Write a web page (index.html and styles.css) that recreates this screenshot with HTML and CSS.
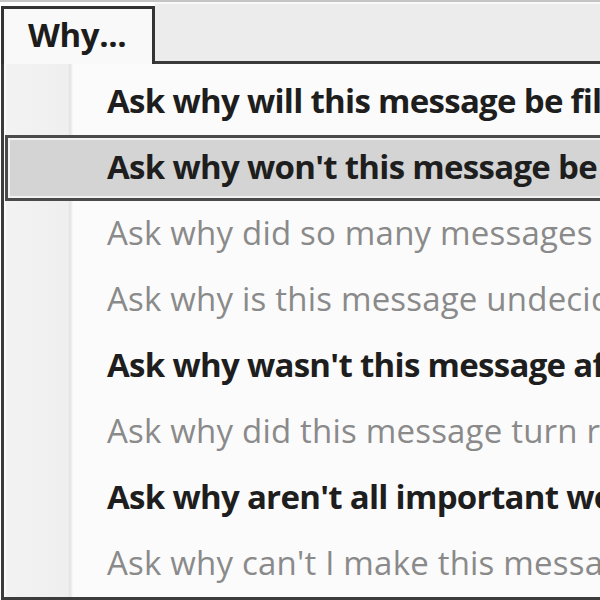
FILE: index.html
```html
<!DOCTYPE html>
<html lang="en">
<head>
    <meta charset="UTF-8">
    <meta name="viewport" content="width=device-width, initial-scale=1.0">
    <title>Why...</title>
    <link rel="stylesheet" href="styles.css">
</head>
<body>
    <div id="window">
        <div class="menubar">
            <div class="menu-tab">Why...</div>
            <div class="menubar-rest"></div>
        </div>

        <ul class="dropdown">
            <li class="item">Ask why will this message be filtered?</li>
            <li class="item active">Ask why won't this message be filtered?</li>
            <li class="item disabled">Ask why did so many messages turn up?</li>
            <li class="item disabled">Ask why is this message undecided?</li>
            <li class="item">Ask why wasn't this message affected?</li>
            <li class="item disabled">Ask why did this message turn red?</li>
            <li class="item">Ask why aren't all important words shown?</li>
            <li class="item disabled">Ask why can't I make this message go away?</li>
        </ul>
    </div>
</body>
</html>
```

FILE: styles.css
```css
/* Zoomed-in classic menu with a "Why..." dropdown */
body {
    margin: 0;
    padding: 0;
    background-color: #fff;
    font-family: 'Open Sans', 'Noto Sans', sans-serif;
    overflow: hidden;
}
#window {
    width: 600px;
    height: 600px;
    overflow: hidden;
    display: flex;
    flex-direction: column;
}
.menubar {
    display: flex;
    height: 64px;
    flex-shrink: 0;
    border-top: 2px solid #c4c4c4;
    box-sizing: border-box;
}
.menu-tab {
    width: 154px;
    margin-top: 4px;
    margin-left: 1px;
    padding-left: 24px;
    box-sizing: border-box;
    background-color: #f9f9f9;
    border: 3px solid #333;
    border-bottom: none;
    font-size: 33px;
    font-weight: 700;
    line-height: 52px;
    color: #1c1c1c;
    letter-spacing: -0.4px;
}
.menubar-rest {
    flex: 1;
    background-color: #ececec;
    border-top: 2px solid #f8f8f8;
    border-bottom: 3px solid #3a3a3a;
}
.dropdown {
    list-style-type: none;
    margin: 0 0 0 1px;
    padding: 5px 0 0 4px;
    flex: 1;
    border-left: 3px solid #3c3c3c;
    border-bottom: 3px solid #3c3c3c;
    background-color: #fbfbfb;
    background-image: linear-gradient(to right, #f3f3f3 0, #efefef 62px, #e2e2e2 64px, #fbfbfb 67px);
    background-size: 68px 100%;
    background-repeat: no-repeat;
    background-position: 2px 0;
}
.item {
    height: 66px;
    box-sizing: border-box;
    padding-left: 99px;
    font-size: 33px;
    font-weight: 700;
    line-height: 64px;
    color: #1e1e1e;
    white-space: nowrap;
    letter-spacing: -0.7px;
}
.item.disabled {
    font-weight: 400;
    color: #8a8a8a;
    letter-spacing: 0.2px;
}
.item.active {
    margin-left: -3px;
    margin-right: -20px;
    padding-left: 99px;
    line-height: 58px;
    background-color: #d4d4d4;
    border: 3px solid #4a4a4a;
    box-shadow: inset 0 0 0 2px #f2f2f2;
}
```
